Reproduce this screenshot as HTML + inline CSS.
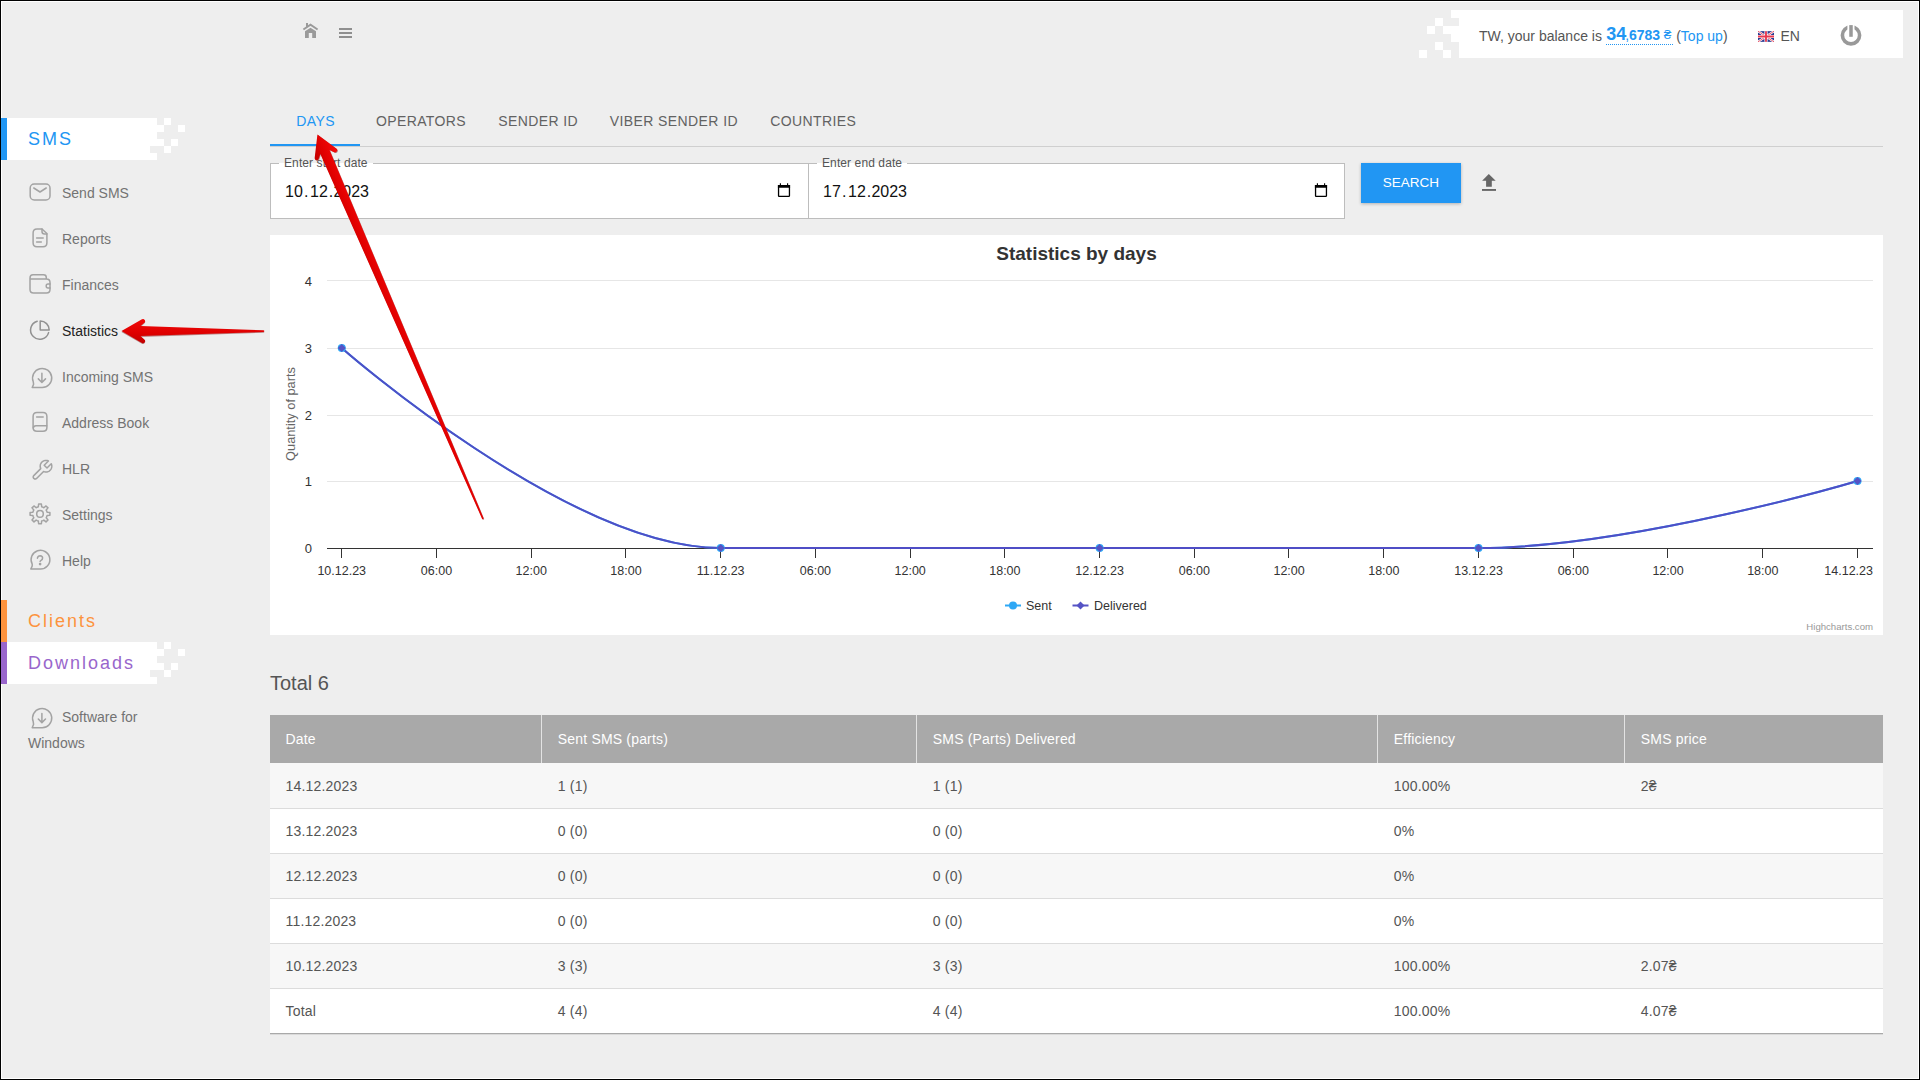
<!DOCTYPE html>
<html><head><meta charset="utf-8">
<style>
*{margin:0;padding:0;box-sizing:border-box}
html,body{width:1920px;height:1080px;overflow:hidden}
body{background:#000;font-family:"Liberation Sans",sans-serif;position:relative}
#frame{position:absolute;left:1px;top:1px;width:1918px;height:1078px;background:#fff}
#page{position:absolute;left:2px;top:2px;width:1916px;height:1076px;background:#eeeeee;overflow:hidden}
.a{position:absolute;white-space:nowrap}
.t{position:absolute;white-space:nowrap;line-height:1}
</style></head>
<body>
<div id="frame"></div>
<div id="page"></div>
<!-- all content is positioned in absolute page coords -->
<div id="root" style="position:absolute;left:0;top:0;width:1920px;height:1080px">

<!-- ===== HEADER ===== -->
<svg class="a" style="left:0;top:0" width="1920" height="70">
  <!-- home -->
  <g fill="#9a9a9a">
    <path d="M305 31.3 L310.5 27.7 L316 31.3 V38 H312.2 V33 H308.8 V38 H305 Z"/>
    <path d="M303.4 29.5 L310.5 24.6 L317.6 29.5" fill="none" stroke="#9a9a9a" stroke-width="1.9"/>
    <rect x="306" y="23" width="2" height="4"/>
  </g>
  <!-- hamburger -->
  <g fill="#8f8f8f">
    <rect x="339" y="28" width="13" height="2"/>
    <rect x="339" y="32" width="13" height="2"/>
    <rect x="339" y="36" width="13" height="2"/>
  </g>
</svg>

<!-- top right panel -->
<div class="a" style="left:1459px;top:10px;width:444px;height:48px;background:#fff"></div>
<svg class="a" style="left:1410px;top:0" width="50" height="60" fill="#fff">
  <rect x="41" y="10" width="8" height="8"/>
  <rect x="25" y="18" width="8" height="8"/>
  <rect x="17" y="26" width="8" height="8"/>
  <rect x="33" y="26" width="16" height="8"/>
  <rect x="41" y="34" width="8" height="8"/>
  <rect x="25" y="42" width="8" height="8"/>
  <rect x="9" y="50" width="8" height="8"/>
  <rect x="33" y="50" width="8" height="8"/>
</svg>
<div class="t" style="left:1479px;top:29.2px;font-size:14px;color:#555">TW, your balance is</div>
<div class="t" style="left:1606.2px;top:24.6px;font-size:18px;font-weight:bold;color:#2196f3">34</div>
<div class="t" style="left:1625.2px;top:28px;font-size:14px;color:#2196f3">,</div>
<div class="t" style="left:1629px;top:28px;font-size:14px;font-weight:bold;color:#2196f3">6783</div>
<div class="t" style="left:1663.8px;top:28px;font-size:13.5px;color:#2196f3">₴</div>
<div class="a" style="left:1606px;top:44px;width:67px;height:0;border-top:1px dotted #2196f3"></div>
<div class="t" style="left:1676.2px;top:29.2px;font-size:14px;color:#555">(<span style="color:#2196f3">Top up</span>)</div>
<svg class="a" style="left:1758px;top:31.4px" width="16" height="11" viewBox="0 0 60 40">
  <rect width="60" height="40" fill="#2b3990"/>
  <path d="M0 0 L60 40 M60 0 L0 40" stroke="#fff" stroke-width="8"/>
  <path d="M0 0 L60 40 M60 0 L0 40" stroke="#e8384f" stroke-width="3"/>
  <path d="M30 0 V40 M0 20 H60" stroke="#fff" stroke-width="12"/>
  <path d="M30 0 V40 M0 20 H60" stroke="#e8384f" stroke-width="7"/>
</svg>
<div class="t" style="left:1780.4px;top:29px;font-size:14px;color:#555">EN</div>
<svg class="a" style="left:1836px;top:20px" width="30" height="30">
  <circle cx="15" cy="15.3" r="8.6" fill="none" stroke="#999" stroke-width="3.6"/>
  <rect x="11.4" y="0" width="7.1" height="12" fill="#fff"/>
  <rect x="13.25" y="5.1" width="3.5" height="11.7" fill="#999"/>
</svg>


<!-- ===== SIDEBAR ===== -->
<div class="a" style="left:1px;top:118px;width:156px;height:42px;background:#fff"></div>
<svg class="a" style="left:140px;top:110px" width="50" height="60" fill="#fff">
  <rect x="10" y="36" width="7" height="7" fill="#eeeeee"/>
  <rect x="17" y="15" width="7" height="7"/>
  <rect x="38" y="15" width="7" height="7"/>
  <rect x="17" y="29" width="7" height="7"/>
  <rect x="31" y="29" width="7" height="7"/>
  <rect x="24" y="8" width="7" height="7"/>
  <rect x="24" y="36" width="7" height="7"/>
</svg>
<div class="a" style="left:1px;top:118px;width:6px;height:42px;background:#2196f3"></div>
<div class="t" style="left:28px;top:130px;font-size:18px;letter-spacing:2px;color:#2196f3">SMS</div>

<svg class="a" style="left:0;top:170px" width="60" height="420" fill="none" stroke="#a3a3a3" stroke-width="1.5" stroke-linecap="round" stroke-linejoin="round">
  <!-- envelope y0=170 -->
  <rect x="30.2" y="14" width="19.8" height="16" rx="4"/>
  <path d="M33.8 18 L40 22 L46.2 18"/>
  <!-- reports -->
  <path d="M42 59 H37 Q33.1 59 33.1 63 V72.8 Q33.1 76.8 37 76.8 H43 Q46.9 76.8 46.9 72.8 V63.5 L42 59 Z"/>
  <path d="M42 59 V61.5 Q42 64 44.5 64 H46.9"/>
  <path d="M36.6 67.9 H43.2 M36.6 71.9 H41.3"/>
  <!-- finances -->
  <path d="M46.3 109 V107.5 Q46.3 104.8 43.5 104.8 H33 Q30 104.8 30 108 V119.5 Q30 123 33.5 123 H46.5 Q50 123 50 119.5 V112.5 Q50 109 46.5 109 H30.5"/>
  <path d="M50 114 H48 Q46.2 114 46.2 116 Q46.2 118 48 118 H50"/>
  <!-- statistics -->
  <g stroke="#929292"><path d="M37.2 151.2 A9.2 9.2 0 1 0 48.6 162.6"/>
  <path d="M40.2 151 V160 H49.2 A9 9 0 0 0 40.2 151 Z"/></g>
  <!-- incoming sms center 41.9,208 -->
  <path d="M33.2 211.5 A9.6 9.6 0 1 1 41.8 217.6 H32.2 L33.6 214.2 Z"/>
  <path d="M41.9 203.3 V212 M38.3 208.9 L41.9 212.5 L45.5 208.9"/>
  <!-- address book -->
  <path d="M37 242.5 H43 Q46.9 242.5 46.9 246.5 V257.5 Q46.9 261.3 43 261.3 H37 Q33.1 261.3 33.1 257.5 V246.5 Q33.1 242.5 37 242.5 Z"/>
  <path d="M33.3 258 Q33.5 255.8 36 255.8 H46.7"/>
  <path d="M36.6 247 H43.2"/>
  <!-- HLR wrench -->
  <path d="M43.56 301.46 L36.60 308.43 L36.18 308.75 L35.70 308.95 L35.18 309.02 L34.66 308.95 L34.18 308.75 L33.77 308.43 L33.45 308.02 L33.25 307.54 L33.18 307.02 L33.25 306.50 L33.45 306.02 L33.77 305.60 L40.74 298.64 L40.52 298.09 L40.35 297.52 L40.25 296.94 L40.20 296.36 L40.22 295.77 L40.29 295.18 L40.42 294.61 L40.61 294.05 L40.86 293.52 L41.16 293.01 L41.50 292.54 L41.90 292.10 L42.34 291.70 L42.81 291.36 L43.32 291.06 L43.85 290.81 L44.41 290.62 L44.98 290.49 L45.57 290.42 L46.16 290.40 L46.74 290.45 L47.32 290.55 L47.89 290.72 L48.44 290.94 L44.16 295.21 L46.99 298.04 L51.26 293.76 L51.48 294.31 L51.65 294.88 L51.75 295.46 L51.80 296.04 L51.78 296.63 L51.71 297.22 L51.58 297.79 L51.39 298.35 L51.14 298.88 L50.84 299.39 L50.50 299.86 L50.10 300.30 L49.66 300.70 L49.19 301.04 L48.68 301.34 L48.15 301.59 L47.59 301.78 L47.02 301.91 L46.43 301.98 L45.84 302.00 L45.26 301.95 L44.68 301.85 L44.11 301.68 Z"/>
  <!-- settings -->
  <g transform="translate(40 343.9)">
    <path d="M-2.85 -6.72 L-1.64 -7.11 L-1.39 -9.90 L1.39 -9.90 L1.64 -7.11 L2.73 -6.77 L3.87 -6.19 L6.02 -7.99 L7.99 -6.02 L6.19 -3.87 L6.72 -2.85 L7.11 -1.64 L9.90 -1.39 L9.90 1.39 L7.11 1.64 L6.77 2.73 L6.19 3.87 L7.99 6.02 L6.02 7.99 L3.87 6.19 L2.85 6.72 L1.64 7.11 L1.39 9.90 L-1.39 9.90 L-1.64 7.11 L-2.73 6.77 L-3.87 6.19 L-6.02 7.99 L-7.99 6.02 L-6.19 3.87 L-6.72 2.85 L-7.11 1.64 L-9.90 1.39 L-9.90 -1.39 L-7.11 -1.64 L-6.77 -2.73 L-6.19 -3.87 L-7.99 -6.02 L-6.02 -7.99 L-3.87 -6.19 Z"/>
    <circle r="3.3"/>
  </g>
  <!-- help -->
  <path d="M32.2 394.2 A9.4 9.4 0 1 1 40 399.1 H30.8 L32.2 396 Z"/>
  <path d="M37.4 388.2 Q37.9 385.7 40.2 385.7 Q42.6 385.9 42.6 388 Q42.6 389.7 40.8 390.6 Q40.1 391 40.1 391.4"/>
  <circle cx="40.1" cy="394.1" r="0.6" fill="#a3a3a3"/>
</svg>

<div class="t" style="left:62px;top:186px;font-size:14px;color:#737373">Send SMS</div>
<div class="t" style="left:62px;top:232px;font-size:14px;color:#737373">Reports</div>
<div class="t" style="left:62px;top:278px;font-size:14px;color:#737373">Finances</div>
<div class="t" style="left:62px;top:324px;font-size:14px;color:#222">Statistics</div>
<div class="t" style="left:62px;top:370px;font-size:14px;color:#737373">Incoming SMS</div>
<div class="t" style="left:62px;top:416px;font-size:14px;color:#737373">Address Book</div>
<div class="t" style="left:62px;top:462px;font-size:14px;color:#737373">HLR</div>
<div class="t" style="left:62px;top:508px;font-size:14px;color:#737373">Settings</div>
<div class="t" style="left:62px;top:554px;font-size:14px;color:#737373">Help</div>

<div class="a" style="left:1px;top:600px;width:6px;height:42px;background:#fd933d"></div>
<div class="t" style="left:28px;top:612px;font-size:18px;letter-spacing:2px;color:#fd933d">Clients</div>
<div class="a" style="left:1px;top:642px;width:156px;height:42px;background:#fff"></div>
<svg class="a" style="left:140px;top:634px" width="50" height="60" fill="#fff">
  <rect x="10" y="36" width="7" height="7" fill="#eeeeee"/>
  <rect x="17" y="15" width="7" height="7"/>
  <rect x="38" y="15" width="7" height="7"/>
  <rect x="17" y="29" width="7" height="7"/>
  <rect x="31" y="29" width="7" height="7"/>
  <rect x="24" y="8" width="7" height="7"/>
  <rect x="24" y="36" width="7" height="7"/>
</svg>
<div class="a" style="left:1px;top:642px;width:6px;height:42px;background:#9966cc"></div>
<div class="t" style="left:28px;top:653.6px;font-size:18px;letter-spacing:2px;color:#9966cc">Downloads</div>
<svg class="a" style="left:0;top:690px" width="60" height="50" fill="none" stroke="#a3a3a3" stroke-width="1.5" stroke-linecap="round" stroke-linejoin="round">
  <path d="M33.2 31.6 A9.6 9.6 0 1 1 41.8 37.7 H32.2 L33.6 34.3 Z"/>
  <path d="M41.9 23.4 V32.1 M38.3 29 L41.9 32.6 L45.5 29"/>
</svg>
<div class="t" style="left:62px;top:710px;font-size:14px;color:#737373">Software for</div>
<div class="t" style="left:28px;top:736px;font-size:14px;color:#737373">Windows</div>

<!-- ===== TABS ===== -->
<div class="t" style="left:296.3px;top:114.2px;font-size:14px;letter-spacing:0.4px;color:#2196f3">DAYS</div>
<div class="t" style="left:375.9px;top:114.2px;font-size:14px;letter-spacing:0.4px;color:#626262">OPERATORS</div>
<div class="t" style="left:498.3px;top:114.2px;font-size:14px;letter-spacing:0.4px;color:#626262">SENDER ID</div>
<div class="t" style="left:609.8px;top:114.2px;font-size:14px;letter-spacing:0.4px;color:#626262">VIBER SENDER ID</div>
<div class="t" style="left:770.3px;top:114.2px;font-size:14px;letter-spacing:0.4px;color:#626262">COUNTRIES</div>
<div class="a" style="left:270px;top:146px;width:1613px;height:1px;background:#cfcfcf"></div>
<div class="a" style="left:270px;top:144px;width:90px;height:2px;background:#2196f3"></div>

<!-- ===== DATE INPUTS ===== -->
<div class="a" style="left:270px;top:163px;width:539px;height:56px;background:#fff;border:1px solid #bdbdbd"></div>
<div class="a" style="left:808px;top:163px;width:537px;height:56px;background:#fff;border:1px solid #bdbdbd"></div>
<div class="a" style="left:279px;top:163px;width:94px;height:1px;background:#fff"></div>
<div class="a" style="left:817px;top:163px;width:90px;height:1px;background:#fff"></div>
<div class="t" style="left:284px;top:156.6px;font-size:12px;letter-spacing:0.1px;color:#555">Enter start date</div>
<div class="t" style="left:822px;top:156.6px;font-size:12px;letter-spacing:0.1px;color:#555">Enter end date</div>
<div class="t" style="left:285.0px;top:184.2px;font-size:16px;color:#111">10</div><div class="t" style="left:304.0px;top:184.2px;font-size:16px;color:#111">.</div><div class="t" style="left:310.0px;top:184.2px;font-size:16px;color:#111">12</div><div class="t" style="left:328.7px;top:184.2px;font-size:16px;color:#111">.</div><div class="t" style="left:333.4px;top:184.2px;font-size:16px;color:#111">2023</div>
<div class="t" style="left:823.0px;top:184.2px;font-size:16px;color:#111">17</div><div class="t" style="left:842.0px;top:184.2px;font-size:16px;color:#111">.</div><div class="t" style="left:848.0px;top:184.2px;font-size:16px;color:#111">12</div><div class="t" style="left:866.7px;top:184.2px;font-size:16px;color:#111">.</div><div class="t" style="left:871.4px;top:184.2px;font-size:16px;color:#111">2023</div>
<svg class="a" style="left:776px;top:182px" width="16" height="17" viewBox="0 0 16 17">
  <path d="M4.4 1.2 V3.5 M11.6 1.2 V3.5" stroke="#000" stroke-width="1.1"/>
  <rect x="2.55" y="3.75" width="10.9" height="10.7" rx="0.8" fill="none" stroke="#000" stroke-width="1.3"/>
  <rect x="1.9" y="3.1" width="12.2" height="2.7" rx="0.4" fill="#000"/>
</svg>
<svg class="a" style="left:1313px;top:182px" width="16" height="17" viewBox="0 0 16 17">
  <path d="M4.4 1.2 V3.5 M11.6 1.2 V3.5" stroke="#000" stroke-width="1.1"/>
  <rect x="2.55" y="3.75" width="10.9" height="10.7" rx="0.8" fill="none" stroke="#000" stroke-width="1.3"/>
  <rect x="1.9" y="3.1" width="12.2" height="2.7" rx="0.4" fill="#000"/>
</svg>

<!-- search button -->
<div class="a" style="left:1361px;top:163px;width:100px;height:40px;background:#2196f3;box-shadow:0 1px 3px rgba(0,0,0,0.25)"></div>
<div class="t" style="left:1361px;top:175.5px;width:100px;text-align:center;font-size:13.5px;color:#fff">SEARCH</div>
<svg class="a" style="left:1480px;top:172px" width="18" height="21" fill="#666">
  <path d="M8.8 2 L15.7 8.7 H11.8 V14.7 H6.1 V8.7 H2.1 Z"/>
  <rect x="2" y="17" width="14" height="1.9"/>
</svg>

<!-- ===== CHART ===== -->
<div class="a" style="left:270px;top:235px;width:1613px;height:400px;background:#fff"></div>
<svg class="a" style="left:0;top:0" width="1920" height="1080" font-family="Liberation Sans, sans-serif">
  <g stroke="#e6e6e6" stroke-width="1">
    <path d="M327 280.5 H1873 M327 348.5 H1873 M327 415.5 H1873 M327 481.5 H1873"/>
  </g>
  <path d="M327 548.5 H1873" stroke="#333" stroke-width="1"/>
  <g stroke="#333" stroke-width="1"><path d="M341.5 548 V558" /><path d="M436.5 548 V558" /><path d="M531.5 548 V558" /><path d="M625.5 548 V558" /><path d="M720.5 548 V558" /><path d="M815.5 548 V558" /><path d="M910.5 548 V558" /><path d="M1004.5 548 V558" /><path d="M1099.5 548 V558" /><path d="M1194.5 548 V558" /><path d="M1288.5 548 V558" /><path d="M1383.5 548 V558" /><path d="M1478.5 548 V558" /><path d="M1573.5 548 V558" /><path d="M1667.5 548 V558" /><path d="M1762.5 548 V558" /><path d="M1857.5 548 V558" /></g>
  <g fill="#333" font-size="12.5" text-anchor="middle"><text x="341.75" y="574.5">10.12.23</text><text x="436.48" y="574.5">06:00</text><text x="531.22" y="574.5">12:00</text><text x="625.95" y="574.5">18:00</text><text x="720.69" y="574.5">11.12.23</text><text x="815.42" y="574.5">06:00</text><text x="910.16" y="574.5">12:00</text><text x="1004.89" y="574.5">18:00</text><text x="1099.62" y="574.5">12.12.23</text><text x="1194.36" y="574.5">06:00</text><text x="1289.09" y="574.5">12:00</text><text x="1383.83" y="574.5">18:00</text><text x="1478.56" y="574.5">13.12.23</text><text x="1573.30" y="574.5">06:00</text><text x="1668.03" y="574.5">12:00</text><text x="1762.77" y="574.5">18:00</text><text x="1873" y="574.5" text-anchor="end">14.12.23</text></g>
  <g fill="#333" font-size="13" text-anchor="end">
    <text x="312" y="286">4</text>
    <text x="312" y="352.5">3</text>
    <text x="312" y="419.5">2</text>
    <text x="312" y="486">1</text>
    <text x="312" y="553">0</text>
  </g>
  <text transform="translate(295 414) rotate(-90)" text-anchor="middle" font-size="12.8" fill="#666">Quantity of parts</text>
  <text x="1076.5" y="259.5" text-anchor="middle" font-size="19" font-weight="bold" fill="#333">Statistics by days</text>
  <text x="1873" y="629.6" text-anchor="end" font-size="9.6" fill="#999">Highcharts.com</text>
  <!-- series -->
  <path d="M 341.75 348.00 C 341.75 348.00 569.15 548.00 720.75 548.00 C 872.29 548.00 948.06 548.00 1099.60 548.00 C 1251.16 548.00 1326.94 548.00 1478.50 548.00 C 1630.10 548.00 1857.50 481.00 1857.50 481.00" fill="none" stroke="#2fa8f5" stroke-width="2"/>
  <path d="M 341.75 348.00 C 341.75 348.00 569.15 548.00 720.75 548.00 C 872.29 548.00 948.06 548.00 1099.60 548.00 C 1251.16 548.00 1326.94 548.00 1478.50 548.00 C 1630.10 548.00 1857.50 481.00 1857.50 481.00" fill="none" stroke="#4f4ec6" stroke-width="2"/>
  <g fill="#2fa8f5">
    <circle cx="341.75" cy="348" r="4"/><circle cx="720.75" cy="548" r="4"/><circle cx="1099.6" cy="548" r="4"/><circle cx="1478.5" cy="548" r="4"/><circle cx="1857.5" cy="481" r="4"/>
  </g>
  <g fill="#5553c5">
    <path d="M341.75 344.00 L345.75 348.00 L341.75 352.00 L337.75 348.00 Z"/><path d="M720.75 544.00 L724.75 548.00 L720.75 552.00 L716.75 548.00 Z"/><path d="M1099.60 544.00 L1103.60 548.00 L1099.60 552.00 L1095.60 548.00 Z"/><path d="M1478.50 544.00 L1482.50 548.00 L1478.50 552.00 L1474.50 548.00 Z"/><path d="M1857.50 477.00 L1861.50 481.00 L1857.50 485.00 L1853.50 481.00 Z"/>
  </g>
  <!-- legend -->
  <path d="M1005 605.5 H1021" stroke="#2fa8f5" stroke-width="2"/>
  <circle cx="1013" cy="605.5" r="4" fill="#2fa8f5"/>
  <text x="1026" y="610" font-size="12.5" fill="#333">Sent</text>
  <path d="M1072.5 605.5 H1088.5" stroke="#5553c5" stroke-width="2"/>
  <path d="M1080.5 601.5 L1084.5 605.5 L1080.5 609.5 L1076.5 605.5 Z" fill="#5553c5"/>
  <text x="1094" y="610" font-size="12.5" fill="#333">Delivered</text>
</svg>

<!-- ===== TABLE ===== -->
<div class="t" style="left:270px;top:672.9px;font-size:20px;color:#555">Total 6</div>
<div class="a" style="left:270px;top:715px;width:1613px;height:48px;background:#a9a9a9"></div>
<div class="a" style="left:541px;top:715px;width:1px;height:48px;background:#e3e3e3"></div>
<div class="a" style="left:916px;top:715px;width:1px;height:48px;background:#e3e3e3"></div>
<div class="a" style="left:1377px;top:715px;width:1px;height:48px;background:#e3e3e3"></div>
<div class="a" style="left:1624px;top:715px;width:1px;height:48px;background:#e3e3e3"></div>
<div class="t" style="left:285.5px;top:732.1px;font-size:14px;letter-spacing:0.18px;color:#fff">Date</div>
<div class="t" style="left:557.8px;top:732.1px;font-size:14px;letter-spacing:0.18px;color:#fff">Sent SMS (parts)</div>
<div class="t" style="left:932.8px;top:732.1px;font-size:14px;letter-spacing:0.18px;color:#fff">SMS (Parts) Delivered</div>
<div class="t" style="left:1393.8px;top:732.1px;font-size:14px;letter-spacing:0.18px;color:#fff">Efficiency</div>
<div class="t" style="left:1640.8px;top:732.1px;font-size:14px;letter-spacing:0.18px;color:#fff">SMS price</div>
<div class="a" style="left:270px;top:988px;width:1613px;height:45px;background:#fff"></div>
<div class="a" style="left:270px;top:1033px;width:1613px;height:1px;background:#a9a9a9"></div>
<div class="a" style="left:270px;top:1034px;width:1613px;height:1px;background:#dadada"></div>
<div class="a" style="left:270px;top:943px;width:1613px;height:46px;background:#f7f7f7;border-bottom:1px solid #dcdcdc"></div>
<div class="a" style="left:270px;top:898px;width:1613px;height:46px;background:#fff;border-bottom:1px solid #dcdcdc"></div>
<div class="a" style="left:270px;top:853px;width:1613px;height:46px;background:#f7f7f7;border-bottom:1px solid #dcdcdc"></div>
<div class="a" style="left:270px;top:808px;width:1613px;height:46px;background:#fff;border-bottom:1px solid #dcdcdc"></div>
<div class="a" style="left:270px;top:763px;width:1613px;height:46px;background:#f7f7f7;border-bottom:1px solid #dcdcdc"></div>
<div class="t" style="left:285.5px;top:779.3px;font-size:14px;letter-spacing:0.18px;color:#555">14.12.2023</div>
<div class="t" style="left:557.8px;top:779.3px;font-size:14px;letter-spacing:0.18px;color:#555">1 (1)</div>
<div class="t" style="left:932.8px;top:779.3px;font-size:14px;letter-spacing:0.18px;color:#555">1 (1)</div>
<div class="t" style="left:1393.8px;top:779.3px;font-size:14px;letter-spacing:0.18px;color:#555">100.00%</div>
<div class="t" style="left:1640.8px;top:779.3px;font-size:14px;letter-spacing:0.18px;color:#555">2₴</div>
<div class="t" style="left:285.5px;top:823.7px;font-size:14px;letter-spacing:0.18px;color:#555">13.12.2023</div>
<div class="t" style="left:557.8px;top:823.7px;font-size:14px;letter-spacing:0.18px;color:#555">0 (0)</div>
<div class="t" style="left:932.8px;top:823.7px;font-size:14px;letter-spacing:0.18px;color:#555">0 (0)</div>
<div class="t" style="left:1393.8px;top:823.7px;font-size:14px;letter-spacing:0.18px;color:#555">0%</div>
<div class="t" style="left:285.5px;top:868.7px;font-size:14px;letter-spacing:0.18px;color:#555">12.12.2023</div>
<div class="t" style="left:557.8px;top:868.7px;font-size:14px;letter-spacing:0.18px;color:#555">0 (0)</div>
<div class="t" style="left:932.8px;top:868.7px;font-size:14px;letter-spacing:0.18px;color:#555">0 (0)</div>
<div class="t" style="left:1393.8px;top:868.7px;font-size:14px;letter-spacing:0.18px;color:#555">0%</div>
<div class="t" style="left:285.5px;top:913.7px;font-size:14px;letter-spacing:0.18px;color:#555">11.12.2023</div>
<div class="t" style="left:557.8px;top:913.7px;font-size:14px;letter-spacing:0.18px;color:#555">0 (0)</div>
<div class="t" style="left:932.8px;top:913.7px;font-size:14px;letter-spacing:0.18px;color:#555">0 (0)</div>
<div class="t" style="left:1393.8px;top:913.7px;font-size:14px;letter-spacing:0.18px;color:#555">0%</div>
<div class="t" style="left:285.5px;top:958.7px;font-size:14px;letter-spacing:0.18px;color:#555">10.12.2023</div>
<div class="t" style="left:557.8px;top:958.7px;font-size:14px;letter-spacing:0.18px;color:#555">3 (3)</div>
<div class="t" style="left:932.8px;top:958.7px;font-size:14px;letter-spacing:0.18px;color:#555">3 (3)</div>
<div class="t" style="left:1393.8px;top:958.7px;font-size:14px;letter-spacing:0.18px;color:#555">100.00%</div>
<div class="t" style="left:1640.8px;top:958.7px;font-size:14px;letter-spacing:0.18px;color:#555">2.07₴</div>
<div class="t" style="left:285.5px;top:1003.7px;font-size:14px;letter-spacing:0.18px;color:#555">Total</div>
<div class="t" style="left:557.8px;top:1003.7px;font-size:14px;letter-spacing:0.18px;color:#555">4 (4)</div>
<div class="t" style="left:932.8px;top:1003.7px;font-size:14px;letter-spacing:0.18px;color:#555">4 (4)</div>
<div class="t" style="left:1393.8px;top:1003.7px;font-size:14px;letter-spacing:0.18px;color:#555">100.00%</div>
<div class="t" style="left:1640.8px;top:1003.7px;font-size:14px;letter-spacing:0.18px;color:#555">4.07₴</div>

<!-- ===== ANNOTATION ARROWS ===== -->
<svg class="a" style="left:0;top:0" width="1920" height="1080">
  <defs>
    <linearGradient id="rg" x1="0" y1="0" x2="0" y2="1">
      <stop offset="0" stop-color="#f00a0a"/>
      <stop offset="0.55" stop-color="#e00000"/>
      <stop offset="1" stop-color="#c20000"/>
    </linearGradient>
    <linearGradient id="rg2" gradientUnits="userSpaceOnUse" x1="0" y1="-10" x2="0" y2="10">
      <stop offset="0" stop-color="#f20808"/>
      <stop offset="0.6" stop-color="#e00000"/>
      <stop offset="1" stop-color="#c80000"/>
    </linearGradient>
  </defs>
  <g transform="translate(121.2 331.1)"><path d="M0.3 0 L20.76 -11.82 A2.10 2.10 0 0 1 23.19 -8.42 L19.30 -5.00 L142.30 -0.80 A0.80 0.80 0 0 1 142.30 0.80 L19.30 5.00 L23.19 8.42 A2.10 2.10 0 0 1 20.76 11.82 Z" fill="#7a0000" opacity="0.45" transform="translate(0 0.8)"/><path d="M0.3 0 L20.76 -11.82 A2.10 2.10 0 0 1 23.19 -8.42 L19.30 -5.00 L142.30 -0.80 A0.80 0.80 0 0 1 142.30 0.80 L19.30 5.00 L23.19 8.42 A2.10 2.10 0 0 1 20.76 11.82 Z" fill="url(#rg)"/></g>
  <g transform="translate(317.3 134.2) rotate(66.7)"><path d="M0.3 0 L20.76 -11.82 A2.10 2.10 0 0 1 23.19 -8.42 L19.30 -5.00 L418.30 -0.80 A0.80 0.80 0 0 1 418.30 0.80 L19.30 5.00 L23.19 8.42 A2.10 2.10 0 0 1 20.76 11.82 Z" fill="#7a0000" opacity="0.45" transform="rotate(-66.7) translate(0.6 0.6) rotate(66.7)"/><path d="M0.3 0 L20.76 -11.82 A2.10 2.10 0 0 1 23.19 -8.42 L19.30 -5.00 L418.30 -0.80 A0.80 0.80 0 0 1 418.30 0.80 L19.30 5.00 L23.19 8.42 A2.10 2.10 0 0 1 20.76 11.82 Z" fill="url(#rg2)"/></g>
</svg>

</div>
</body></html>
